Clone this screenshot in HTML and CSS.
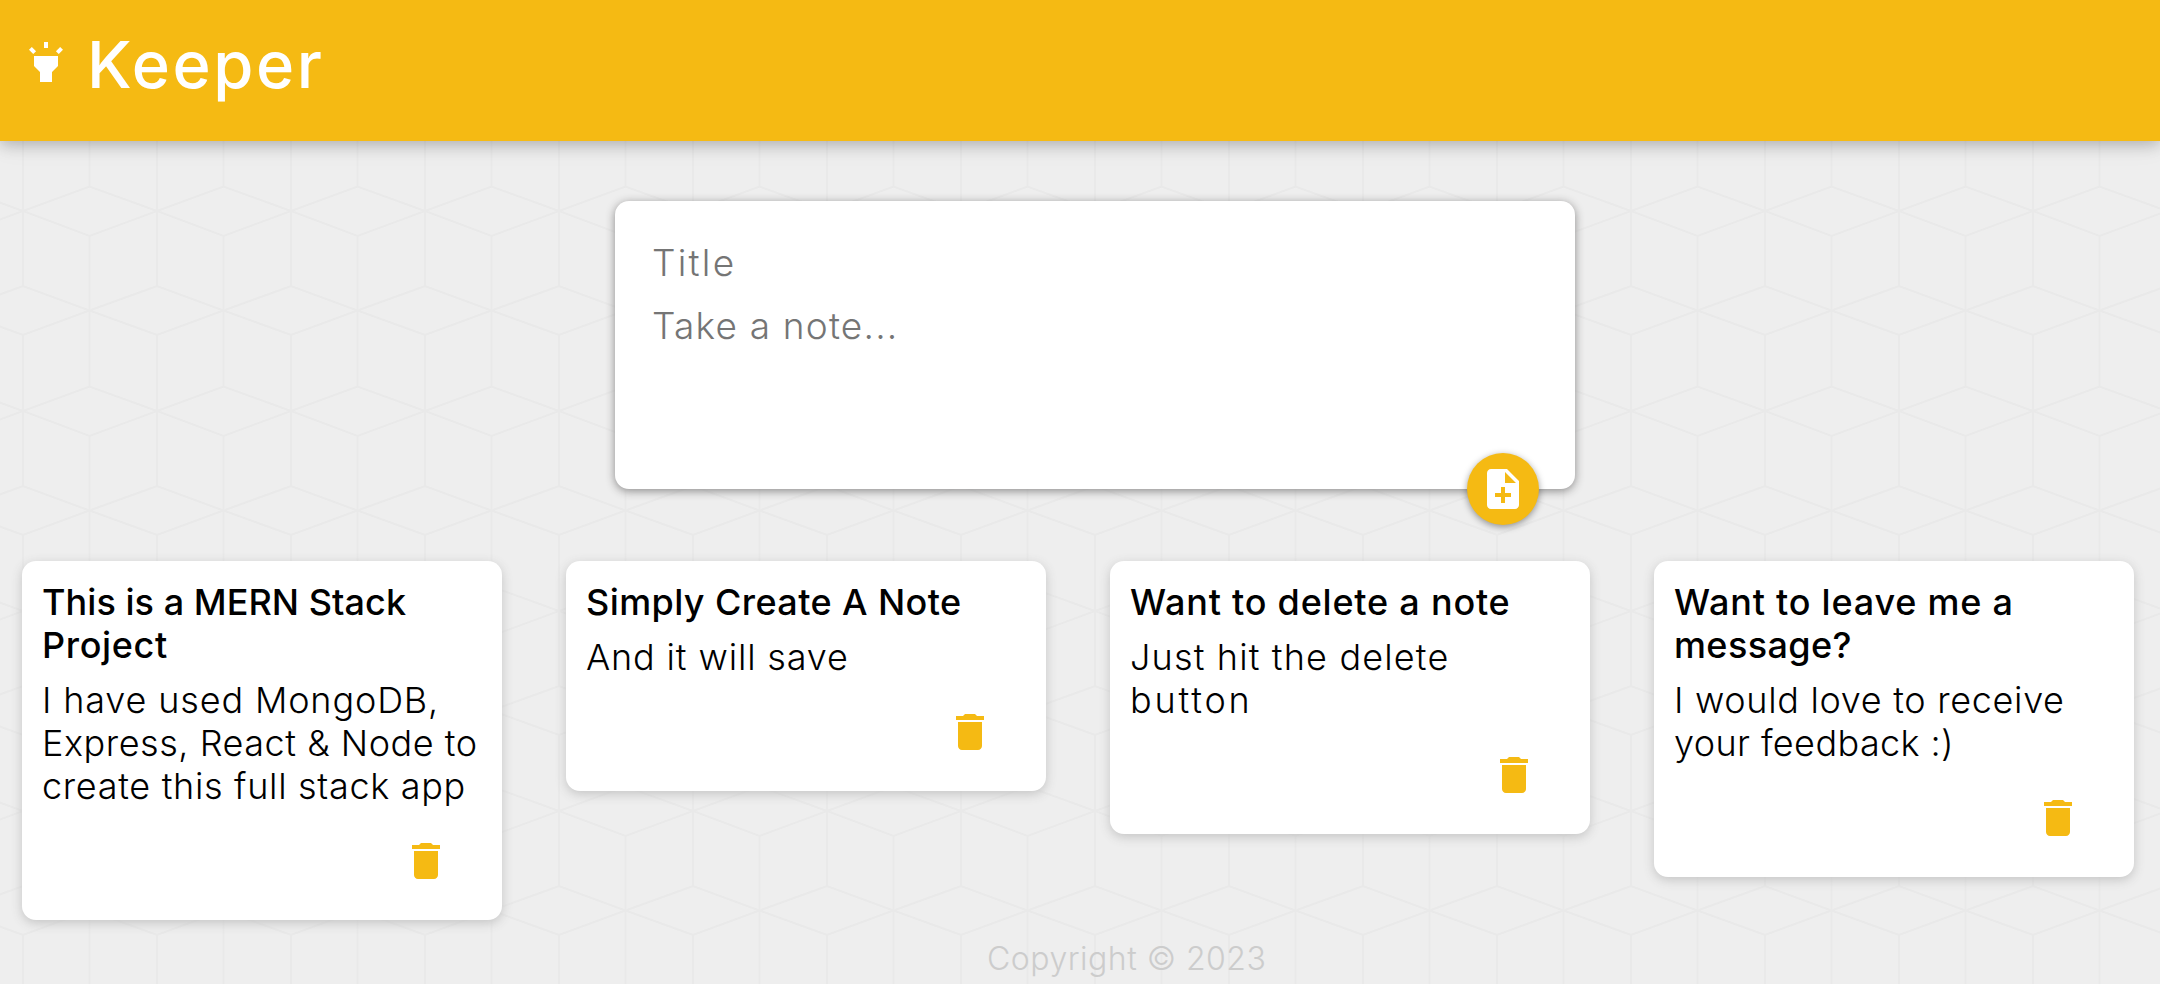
FILE: index.html
```
<!DOCTYPE html>
<html lang="en">
<head>
<meta charset="utf-8">
<title>Keeper</title>
<link rel="stylesheet" href="styles.css">
</head>
<body>
<svg class="sprite" aria-hidden="true">
  <symbol id="trash" viewBox="0 0 24 24"><path d="M6 19c0 1.1.9 2 2 2h8c1.1 0 2-.9 2-2V7H6v12zM19 4h-3.500l-1-1h-5l-1 1H5v2h14V4z"/></symbol>
</svg>
<header class="header">
  <svg class="icon" viewBox="0 0 24 24"><path d="M6 14l3 3v5h6v-5l3-3V9H6v5zm5-12h2v3h-2V2zM3.5 5.88l1.41-1.41 2.12 2.12L5.62 8 3.5 5.88zm13.46.71l2.12-2.12 1.41 1.41L18.38 8l-1.42-1.41z"/></svg>
  <h1 class="brand">Keeper</h1>
</header>
<main>
  <form class="create">
    <input class="field field-title" placeholder="Title">
    <textarea class="field field-body" placeholder="Take a note..."></textarea>
    <button class="add" type="button" aria-label="Add"><svg class="icon" viewBox="0 0 24 24"><path d="M14 2H6c-1.1 0-1.99.9-1.99 2L4 20c0 1.1.89 2 1.99 2H18c1.1 0 2-.9 2-2V8l-6-6zm2 14h-3v3h-2v-3H8v-2h3v-3h2v3h3v2zm-3-7V3.5L18.5 9H13z"/></svg></button>
  </form>
  <section class="notes">
    <article class="note">
      <h2><span class="t1">This is a MERN Stack</span> <span class="t4">Project</span></h2>
      <p><span class="b4">I have used MongoDB,</span> <span class="b2">Express, React &amp; Node to</span> <span class="b3">create this full stack app</span></p>
      <button class="delete" aria-label="Delete"><svg class="icon"><use href="#trash"/></svg></button>
    </article>
    <article class="note">
      <h2><span class="t2">Simply Create A Note</span></h2>
      <p><span class="b4">And it will save</span></p>
      <button class="delete" aria-label="Delete"><svg class="icon"><use href="#trash"/></svg></button>
    </article>
    <article class="note">
      <h2><span class="t5">Want to delete a note</span></h2>
      <p><span class="b6">Just hit the delete</span> <span class="b7">button</span></p>
      <button class="delete" aria-label="Delete"><svg class="icon"><use href="#trash"/></svg></button>
    </article>
    <article class="note">
      <h2><span class="t5">Want to leave me a</span> <span class="t2">message?</span></h2>
      <p><span class="b3">I would love to receive</span> <span class="b1">your feedback :)</span></p>
      <button class="delete" aria-label="Delete"><svg class="icon"><use href="#trash"/></svg></button>
    </article>
  </section>
</main>
<footer class="footer">Copyright © 2023</footer>
</body>
</html>
```
FILE: styles.css
```
* { box-sizing: border-box; margin: 0; padding: 0; }
html { height: 100%; overflow: hidden; }
body {
  height: 984px;
  overflow: hidden;
  display: flex;
  flex-direction: column;
  font-family: Inter, "Liberation Sans", sans-serif;
  font-weight: 300;
  color: #000;
  background: #eee url("data:image/svg+xml,%3Csvg xmlns='http://www.w3.org/2000/svg' width='134' height='200'%3E%3Cg fill='none' stroke='%23e9e9e9' stroke-width='2'%3E%3Cpath d='M23 0V86M23 135V200M89.5 36V186.5'/%3E%3Cpath d='M23 11L89.5 -13.5L157 11L89.5 36ZM-111 11L-44.5 -13.5L23 11L-44.5 36ZM23 211L89.5 186.5L157 211L89.5 236ZM-111 211L-44.5 186.5L23 211L-44.5 236Z'/%3E%3Cpath d='M-44.5 110.5L23 86L89.5 110.5L23 135ZM89.5 110.5L157 86L223.5 110.5L157 135Z'/%3E%3C/g%3E%3C/svg%3E") 0 0 / 134px 200px;
}
button { border: 0; background: none; display: flex; align-items: center; justify-content: center; }
.sprite { display: none; }
.icon { width: 48px; height: 48px; fill: currentColor; display: block; flex: none; }

.header {
  height: 141px;
  flex: none;
  display: flex;
  align-items: flex-start;
  gap: 17px;
  padding: 38px 22px 0;
  background: #f5ba13;
  color: #fff;
  box-shadow: 0 3px 15px rgba(0,0,0,.24), 0 6px 24px rgba(0,0,0,.06);
}
.brand { font-size: 65px; font-weight: 500; line-height: 76px; letter-spacing: 2.6px; margin-top: -11px; }

.create {
  position: relative;
  width: 960px;
  height: 288px;
  margin: 60px 0 0 615px;
  padding: 39px 37px;
  display: flex;
  flex-direction: column;
  background: #fff;
  border-radius: 14px;
  box-shadow: 0 2px 10px #8a8989;
}
.field { border: 0; outline: 0; resize: none; background: none; font: 300 37px/45px Inter, "Liberation Sans", sans-serif; overflow: hidden; }
.field::placeholder { color: #757575; opacity: 1; }
.field-title { height: 45px; letter-spacing: 2.2px; }
.field-body { height: 140px; margin-top: 18px; letter-spacing: 1.2px; }
.add {
  position: absolute;
  right: 36px;
  bottom: -36px;
  width: 72px;
  height: 72px;
  border-radius: 50%;
  background: #f5ba13;
  color: #fff;
  box-shadow: 0 2px 7px rgba(0,0,0,.4);
}

.notes { display: flex; align-items: flex-start; gap: 64px; margin: 72px 0 0 22px; }
.note {
  width: 480px;
  flex: none;
  padding: 20px 0 35px 20px;
  background: #fff;
  border-radius: 14px;
  box-shadow: 0 3px 11px #c4c4c4;
}
.note span { display: block; white-space: nowrap; }
.note h2 { font-size: 36px; line-height: 43px; font-weight: 500; }
.note p { font-size: 36px; line-height: 43px; margin-top: 12px; }
.delete { margin: 29px 0 0 360px; color: #f5ba13; }

.t1 { letter-spacing: .05px; }
.t2 { letter-spacing: .4px; }
.t4 { letter-spacing: .65px; }
.t5 { letter-spacing: .78px; }
.b1 { letter-spacing: .4px; }
.b2 { letter-spacing: .53px; }
.b3 { letter-spacing: .68px; }
.b4 { letter-spacing: .85px; }
.b6 { letter-spacing: 1.15px; }
.b7 { letter-spacing: 2.8px; }

.footer { margin: 19px 0 0 987px; font-size: 32px; line-height: 40px; letter-spacing: .5px; color: #ccc; }
```
